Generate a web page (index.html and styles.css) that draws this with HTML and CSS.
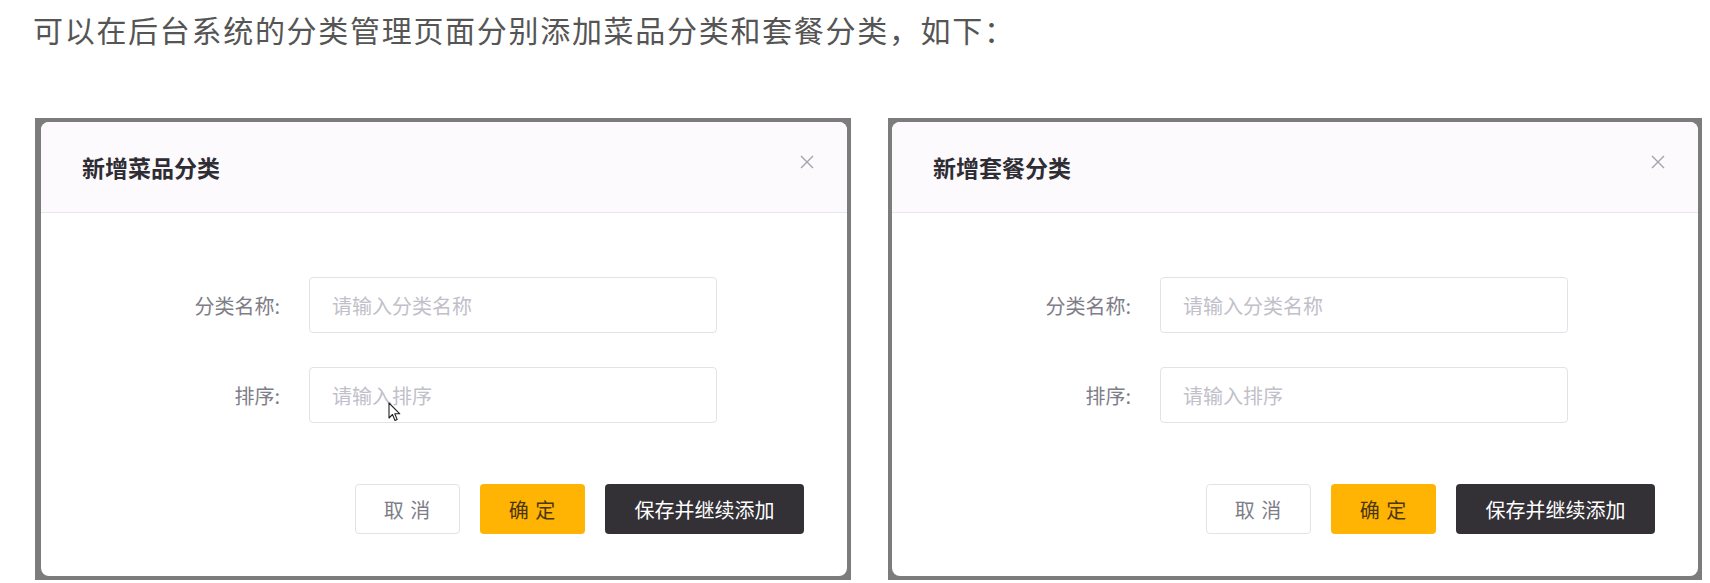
FILE: index.html
```html
<!DOCTYPE html>
<html lang="zh-CN">
<head>
    <meta charset="UTF-8">
    <meta name="viewport" content="width=device-width, initial-scale=1.0">
    <title>分类管理 - 新增分类</title>
    <link rel="stylesheet" href="styles.css">
</head>
<body>
    <p class="intro">可以在后台系统的分类管理页面分别添加菜品分类和套餐分类，如下：</p>

    <div class="shots">
        <div class="frame frame-first">
            <div class="dialog">
                <div class="dialog-header">
                    <span class="dialog-title">新增菜品分类</span>
                    <span class="close">
                        <svg width="14" height="14" viewBox="0 0 14 14"><path d="M1 1L13 13M13 1L1 13" stroke="#a3a2ad" stroke-width="1.4" fill="none"/></svg>
                    </span>
                </div>
                <div class="dialog-body">
                    <div class="form-row">
                        <label>分类名称:</label>
                        <input type="text" placeholder="请输入分类名称">
                    </div>
                    <div class="form-row">
                        <label>排序:</label>
                        <input type="text" placeholder="请输入排序">
                    </div>
                </div>
                <div class="dialog-footer">
                    <button class="btn btn-cancel">取 消</button>
                    <button class="btn btn-ok">确 定</button>
                    <button class="btn btn-dark">保存并继续添加</button>
                </div>
                <!-- mouse pointer caught in the screenshot -->
                <svg class="cursor" width="13" height="20" viewBox="0 0 13 20"><path d="M1 1L1 16L4.5 12.5L7 18.5L9.2 17.6L6.8 11.8L11.8 11.8Z" fill="#fff" stroke="#222" stroke-width="1.1" stroke-linejoin="round"/></svg>
            </div>
        </div>

        <div class="frame">
            <div class="dialog">
                <div class="dialog-header">
                    <span class="dialog-title">新增套餐分类</span>
                    <span class="close">
                        <svg width="14" height="14" viewBox="0 0 14 14"><path d="M1 1L13 13M13 1L1 13" stroke="#a3a2ad" stroke-width="1.4" fill="none"/></svg>
                    </span>
                </div>
                <div class="dialog-body">
                    <div class="form-row">
                        <label>分类名称:</label>
                        <input type="text" placeholder="请输入分类名称">
                    </div>
                    <div class="form-row">
                        <label>排序:</label>
                        <input type="text" placeholder="请输入排序">
                    </div>
                </div>
                <div class="dialog-footer">
                    <button class="btn btn-cancel">取 消</button>
                    <button class="btn btn-ok">确 定</button>
                    <button class="btn btn-dark">保存并继续添加</button>
                </div>
            </div>
        </div>
    </div>
</body>
</html>
```

FILE: styles.css
```css
body {
    margin: 0;
    padding: 0 0 0 33px;
    background: #fff;
    font-family: "Noto Sans CJK SC", "Noto Sans", sans-serif;
}
.intro {
    margin: 7px 0 0;
    font-size: 30px;
    line-height: 44px;
    letter-spacing: 1.7px;
    color: #555;
}
.shots {
    display: flex;
    gap: 37px;
    margin: 67px 0 0 2px;
}
.frame {
    background: #7c7c7c;
    padding: 4px;
}
.frame-first {
    padding-left: 6px;
}
.dialog {
    position: relative;
    width: 806px;
    background: #fff;
    border-radius: 8px;
    overflow: hidden;
}
.dialog-header {
    height: 90px;
    display: flex;
    justify-content: space-between;
    padding: 0 33px 0 41px;
    background: #fdfafd;
    border-bottom: 1px solid #e9e7eb;
}
.dialog-title {
    align-self: center;
    font-size: 23px;
    font-weight: bold;
    color: #2e2d33;
}
.close {
    margin-top: 33px;
    width: 14px;
    height: 14px;
    line-height: 0;
}
.dialog-body {
    padding-top: 64px;
    display: flex;
    flex-direction: column;
    gap: 34px;
}
.form-row {
    display: flex;
    align-items: center;
}
.form-row label {
    width: 239px;
    margin-right: 29px;
    text-align: right;
    font-size: 20px;
    color: #7e7d88;
}
.form-row input {
    width: 408px;
    height: 56px;
    box-sizing: border-box;
    padding: 0 22px;
    border: 1px solid #e3e2e8;
    border-radius: 4px;
    font-family: inherit;
    font-size: 20px;
    color: #333;
    background: #fff;
    outline: none;
}
.form-row input::placeholder {
    color: #c1c0ca;
}
.dialog-footer {
    display: flex;
    justify-content: flex-end;
    gap: 20px;
    padding: 61px 43px 42px 0;
}
.btn {
    height: 50px;
    border-radius: 4px;
    font-family: inherit;
    font-size: 20px;
    cursor: pointer;
}
.btn-cancel {
    width: 105px;
    background: #fff;
    color: #7e7d88;
    border: 1px solid #e3e2e8;
    letter-spacing: 1px;
}
.btn-ok {
    width: 105px;
    background: #ffb302;
    color: #4a3710;
    border: none;
    letter-spacing: 1px;
}
.btn-dark {
    width: 199px;
    background: #333036;
    color: #fff;
    border: none;
}
.cursor {
    position: absolute;
    left: 347px;
    top: 280px;
}
```
